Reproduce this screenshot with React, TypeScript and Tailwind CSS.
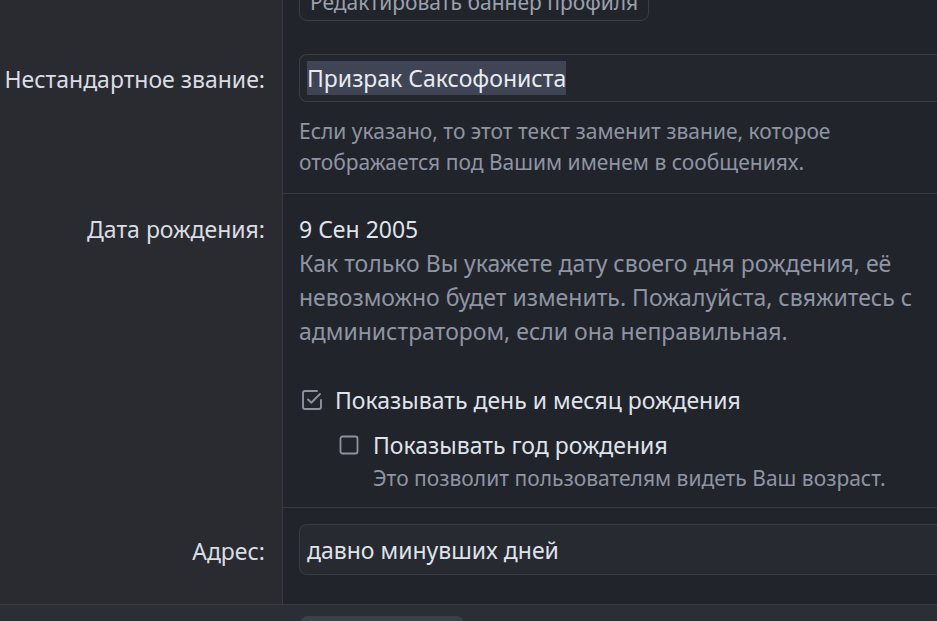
import React from "react";

function CheckedBox() {
  return (
    <svg width="24" height="24" viewBox="0 0 24 24" fill="none" className="shrink-0">
      <path
        d="M21 12v7a2 2 0 0 1-2 2H5a2 2 0 0 1-2-2V5a2 2 0 0 1 2-2h12"
        stroke="#8b93a2"
        strokeWidth="1.9"
        strokeLinecap="round"
      />
      <path
        d="M8 11.5l3.2 3.2L20 6"
        stroke="#8b93a2"
        strokeWidth="1.9"
        strokeLinecap="round"
        strokeLinejoin="round"
      />
    </svg>
  );
}

function EmptyBox() {
  return (
    <svg width="20" height="20" viewBox="0 0 20 20" fill="none" className="shrink-0">
      <rect x="1.5" y="1.5" width="17" height="17" rx="2" stroke="#8b93a2" strokeWidth="1.8" />
    </svg>
  );
}

export default function App() {
  return (
    <div
      className="h-[621px] overflow-hidden bg-[#22242b] text-[#dfe3ea] flex flex-col"
      style={{ fontFamily: '"Noto Sans", "Open Sans", sans-serif' }}
    >
      <div className="-mt-[33px] flex-1 flex flex-col">
        {/* Banner button row */}
        <div className="flex">
          <div className="w-[283px] shrink-0 bg-[#2a2b30] border-r border-[#393b41]" />
          <div className="flex-1 pl-4 pt-4">
            <button className="h-[38px] px-[10px] rounded-lg border border-[#3b3e46] text-[21px] leading-[28px] text-[#9aa1ae]">
              Редактировать баннер профиля
            </button>
          </div>
        </div>

        {/* Custom title */}
        <div className="flex">
          <div className="w-[283px] shrink-0 bg-[#2a2b30] border-r border-[#393b41] pr-[17px] pt-[41px] text-right text-[23px] leading-[34px] text-[#d9dde4]">
            Нестандартное звание:
          </div>
          <div className="flex-1 pl-4 pt-[33px] pb-[15px]">
            <div className="h-[48px] -mr-4 rounded-l-lg border border-[#3a3d45] border-r-0 bg-[#24262e] flex items-center pl-[7px]">
              <span className="bg-[#3f4554] text-[23px] leading-[34px] text-[#e8ebf0]">
                Призрак Саксофониста
              </span>
            </div>
            <p className="mt-[14px] text-[21px] leading-[31px] text-[#8e95a3]">
              Если указано, то этот текст заменит звание, которое
              <br />
              отображается под Вашим именем в сообщениях.
            </p>
          </div>
        </div>

        {/* Birthday */}
        <div className="flex">
          <div className="w-[283px] shrink-0 bg-[#2a2b30] border-r border-[#393b41] pr-[17px] pt-[19px] text-right text-[23px] leading-[34px] text-[#d9dde4]">
            Дата рождения:
          </div>
          <div className="flex-1 pl-4 pt-[18px] pb-[13px] border-t border-[#393b41]">
            <div className="text-[23px] leading-[34px]">9 Сен 2005</div>
            <p className="text-[23px] leading-[34px] text-[#8e95a3]">
              Как только Вы укажете дату своего дня рождения, её
              <br />
              невозможно будет изменить. Пожалуйста, свяжитесь с
              <br />
              администратором, если она неправильная.
            </p>
            <div className="mt-[35px] flex items-center gap-[11px] pl-[1px]">
              <CheckedBox />
              <span className="text-[23px] leading-[34px]">Показывать день и месяц рождения</span>
            </div>
            <div className="mt-[11px] pl-[40px]">
              <div className="flex items-center gap-[14px]">
                <EmptyBox />
                <span className="text-[23px] leading-[34px]">Показывать год рождения</span>
              </div>
              <div className="pt-[1px] pl-[34px] text-[21px] leading-[31px] text-[#8e95a3]">
                Это позволит пользователям видеть Ваш возраст.
              </div>
            </div>
          </div>
        </div>

        {/* Location */}
        <div className="flex flex-1">
          <div className="w-[283px] shrink-0 bg-[#2a2b30] border-r border-[#393b41] pr-[17px] pt-[27px] text-right text-[23px] leading-[34px] text-[#d9dde4]">
            Адрес:
          </div>
          <div className="flex-1 pl-4 pt-[16px] pb-[28px] border-t border-[#393b41]">
            <div className="h-[51px] -mr-4 rounded-l-lg border border-[#3a3d45] border-r-0 bg-[#282a31] flex items-center pl-[7px] text-[23px] leading-[34px]">
              давно минувших дней
            </div>
          </div>
        </div>
      </div>

      {/* Footer */}
      <div className="h-[17px] shrink-0 border-t border-[#3a3c43] bg-[#2c2e35] pl-[300px] pt-[11px]">
        <div className="w-[164px] h-[20px] rounded-t-lg bg-[#3b414c]" />
      </div>
    </div>
  );
}
